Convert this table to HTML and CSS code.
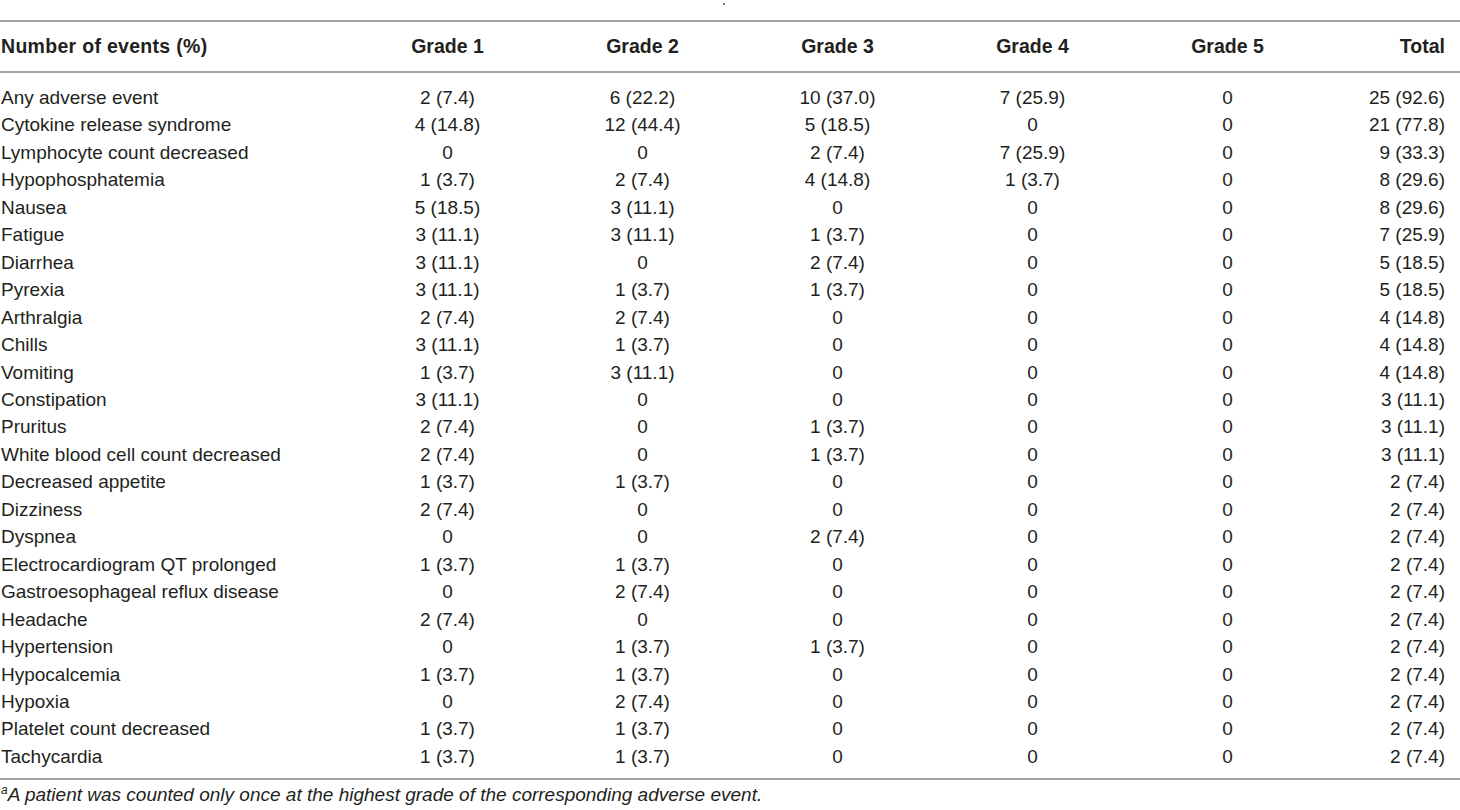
FILE: index.html
```html
<!DOCTYPE html>
<html lang="en">
  <head>
    <meta charset="UTF-8" />
    <meta name="viewport" content="width=device-width, initial-scale=1.0" />
    <title>Adverse events by grade</title>
    <link rel="stylesheet" href="styles.css">
  </head>

  <body>
    <!-- 标题残留的小点 -->
    <div class="caption"><span class="dot"></span></div>

    <table class="ae-table">
      <colgroup>
        <col class="col-name" />
        <col class="col-grade" />
        <col class="col-grade" />
        <col class="col-grade" />
        <col class="col-grade" />
        <col class="col-grade" />
        <col class="col-total" />
      </colgroup>
      <thead>
        <tr>
          <th class="name">Number of events (%)</th>
          <th>Grade 1</th>
          <th>Grade 2</th>
          <th>Grade 3</th>
          <th>Grade 4</th>
          <th>Grade 5</th>
          <th class="total">Total</th>
        </tr>
      </thead>
      <tbody>
        <tr><td class="name">Any adverse event</td><td>2 (7.4)</td><td>6 (22.2)</td><td>10 (37.0)</td><td>7 (25.9)</td><td>0</td><td class="total">25 (92.6)</td></tr>
        <tr><td class="name">Cytokine release syndrome</td><td>4 (14.8)</td><td>12 (44.4)</td><td>5 (18.5)</td><td>0</td><td>0</td><td class="total">21 (77.8)</td></tr>
        <tr><td class="name">Lymphocyte count decreased</td><td>0</td><td>0</td><td>2 (7.4)</td><td>7 (25.9)</td><td>0</td><td class="total">9 (33.3)</td></tr>
        <tr><td class="name">Hypophosphatemia</td><td>1 (3.7)</td><td>2 (7.4)</td><td>4 (14.8)</td><td>1 (3.7)</td><td>0</td><td class="total">8 (29.6)</td></tr>
        <tr><td class="name">Nausea</td><td>5 (18.5)</td><td>3 (11.1)</td><td>0</td><td>0</td><td>0</td><td class="total">8 (29.6)</td></tr>
        <tr><td class="name">Fatigue</td><td>3 (11.1)</td><td>3 (11.1)</td><td>1 (3.7)</td><td>0</td><td>0</td><td class="total">7 (25.9)</td></tr>
        <tr><td class="name">Diarrhea</td><td>3 (11.1)</td><td>0</td><td>2 (7.4)</td><td>0</td><td>0</td><td class="total">5 (18.5)</td></tr>
        <tr><td class="name">Pyrexia</td><td>3 (11.1)</td><td>1 (3.7)</td><td>1 (3.7)</td><td>0</td><td>0</td><td class="total">5 (18.5)</td></tr>
        <tr><td class="name">Arthralgia</td><td>2 (7.4)</td><td>2 (7.4)</td><td>0</td><td>0</td><td>0</td><td class="total">4 (14.8)</td></tr>
        <tr><td class="name">Chills</td><td>3 (11.1)</td><td>1 (3.7)</td><td>0</td><td>0</td><td>0</td><td class="total">4 (14.8)</td></tr>
        <tr><td class="name">Vomiting</td><td>1 (3.7)</td><td>3 (11.1)</td><td>0</td><td>0</td><td>0</td><td class="total">4 (14.8)</td></tr>
        <tr><td class="name">Constipation</td><td>3 (11.1)</td><td>0</td><td>0</td><td>0</td><td>0</td><td class="total">3 (11.1)</td></tr>
        <tr><td class="name">Pruritus</td><td>2 (7.4)</td><td>0</td><td>1 (3.7)</td><td>0</td><td>0</td><td class="total">3 (11.1)</td></tr>
        <tr><td class="name">White blood cell count decreased</td><td>2 (7.4)</td><td>0</td><td>1 (3.7)</td><td>0</td><td>0</td><td class="total">3 (11.1)</td></tr>
        <tr><td class="name">Decreased appetite</td><td>1 (3.7)</td><td>1 (3.7)</td><td>0</td><td>0</td><td>0</td><td class="total">2 (7.4)</td></tr>
        <tr><td class="name">Dizziness</td><td>2 (7.4)</td><td>0</td><td>0</td><td>0</td><td>0</td><td class="total">2 (7.4)</td></tr>
        <tr><td class="name">Dyspnea</td><td>0</td><td>0</td><td>2 (7.4)</td><td>0</td><td>0</td><td class="total">2 (7.4)</td></tr>
        <tr><td class="name">Electrocardiogram QT prolonged</td><td>1 (3.7)</td><td>1 (3.7)</td><td>0</td><td>0</td><td>0</td><td class="total">2 (7.4)</td></tr>
        <tr><td class="name">Gastroesophageal reflux disease</td><td>0</td><td>2 (7.4)</td><td>0</td><td>0</td><td>0</td><td class="total">2 (7.4)</td></tr>
        <tr><td class="name">Headache</td><td>2 (7.4)</td><td>0</td><td>0</td><td>0</td><td>0</td><td class="total">2 (7.4)</td></tr>
        <tr><td class="name">Hypertension</td><td>0</td><td>1 (3.7)</td><td>1 (3.7)</td><td>0</td><td>0</td><td class="total">2 (7.4)</td></tr>
        <tr><td class="name">Hypocalcemia</td><td>1 (3.7)</td><td>1 (3.7)</td><td>0</td><td>0</td><td>0</td><td class="total">2 (7.4)</td></tr>
        <tr><td class="name">Hypoxia</td><td>0</td><td>2 (7.4)</td><td>0</td><td>0</td><td>0</td><td class="total">2 (7.4)</td></tr>
        <tr><td class="name">Platelet count decreased</td><td>1 (3.7)</td><td>1 (3.7)</td><td>0</td><td>0</td><td>0</td><td class="total">2 (7.4)</td></tr>
        <tr><td class="name">Tachycardia</td><td>1 (3.7)</td><td>1 (3.7)</td><td>0</td><td>0</td><td>0</td><td class="total">2 (7.4)</td></tr>
      </tbody>
    </table>

    <p class="footnote"><sup>a</sup>A patient was counted only once at the highest grade of the corresponding adverse event.</p>
  </body>
</html>
```

FILE: styles.css
```css
* {
  margin: 0;
  padding: 0;
}

body {
  background: #fff;
  color: #231f20;
  font-family: "Liberation Sans", Arial, Helvetica, sans-serif;
}

.caption {
  height: 20px;
  display: flex;
  justify-content: center;
  padding-right: 12px;
  box-sizing: border-box;
}

.caption .dot {
  width: 2px;
  height: 2px;
  margin-top: 3px;
  border-radius: 50%;
  background-color: #444;
}

.ae-table {
  width: 1460px;
  table-layout: fixed;
  border-collapse: collapse;
  font-size: 19px;
}

.col-name {
  width: 350px;
}
.col-grade {
  width: 195px;
}
.col-total {
  width: 135px;
}

.ae-table thead tr {
  border-top: 2px solid #a3a3a3;
  border-bottom: 2px solid #a3a3a3;
}

.ae-table th {
  font-size: 19.5px;
  font-weight: bold;
  text-align: center;
  height: 49px;
  line-height: 27px;
  padding: 0;
}

.ae-table th.name {
  letter-spacing: 0.3px;
}

.ae-table td {
  text-align: center;
  line-height: 27.45px;
  white-space: nowrap;
}

.ae-table .name {
  text-align: left;
  padding-left: 1px;
}

.ae-table .total {
  text-align: right;
  padding-right: 15px;
}

.ae-table tbody tr:first-child td {
  padding-top: 11px;
}

.ae-table tbody tr:last-child td {
  padding-bottom: 8px;
}

.ae-table tbody tr:last-child {
  border-bottom: 2px solid #a3a3a3;
}

.footnote {
  font-style: italic;
  font-size: 19px;
  line-height: 22px;
  margin-top: 4px;
  padding-left: 1px;
}

.footnote sup {
  font-size: 12px;
  vertical-align: 7px;
  line-height: 0;
}
```
